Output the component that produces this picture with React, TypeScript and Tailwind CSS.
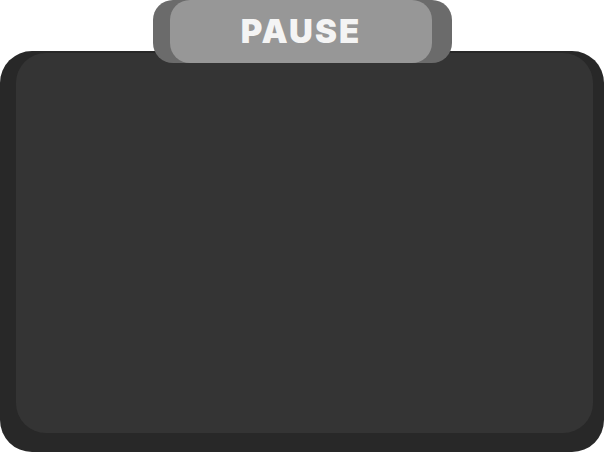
export default function App() {
  return (
    <div className="relative h-[452px] w-[604px] overflow-hidden bg-white">
      <div className="mt-[51px] h-[401px] w-[604px] rounded-[32px] bg-[#282828] pb-[19px] pl-[16px] pr-[11px] pt-[2px]">
        <div className="h-full w-full rounded-[30px] bg-[#343434]" />
      </div>

      <div className="absolute left-[153px] top-0 h-[63px] w-[299px] rounded-[20px] bg-[#6b6b6b] pl-[17px] pr-[20px]">
        <div className="flex h-full items-center justify-center rounded-[20px] bg-[#979797] pt-[1px]">
          <span className="font-['Inter',sans-serif] text-[33px] font-black tracking-[2px] text-[#f4f4f4]">
            PAUSE
          </span>
        </div>
      </div>
    </div>
  );
}
